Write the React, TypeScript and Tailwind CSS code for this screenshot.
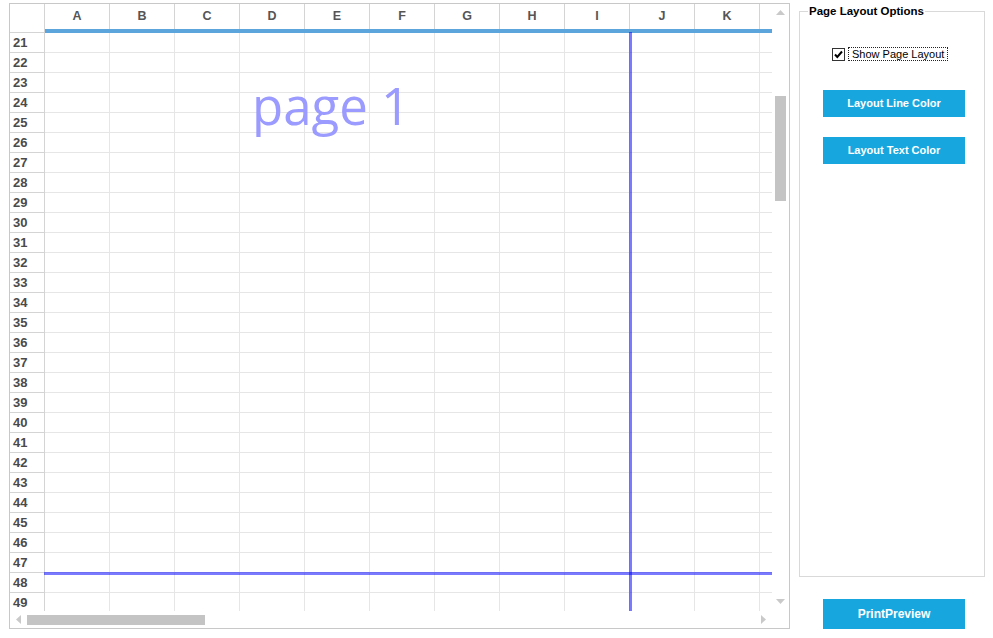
import React from 'react';

const columns = ['A', 'B', 'C', 'D', 'E', 'F', 'G', 'H', 'I', 'J', 'K', ''];
const rows = Array.from({ length: 29 }, (_, i) => 21 + i);

function Arrow({ dir }: { dir: 'up' | 'down' | 'left' | 'right' }) {
  if (dir === 'up' || dir === 'down') {
    return (
      <svg width="9" height="5" viewBox="0 0 9 5" className="block">
        <polygon
          points={dir === 'up' ? '4.5,0 9,5 0,5' : '0,0 9,0 4.5,5'}
          fill="#c9c9c9"
        />
      </svg>
    );
  }
  return (
    <svg width="5" height="9" viewBox="0 0 5 9" className="block">
      <polygon points={dir === 'left' ? '5,0 5,9 0,4.5' : '0,0 5,4.5 0,9'} fill="#c9c9c9" />
    </svg>
  );
}

function Sheet() {
  return (
    <div className="ml-[9px] mt-[3px] w-[781px] h-[626px] border border-[#c8c8c8] flex flex-col">
      <div className="flex h-[607px]">
        {/* grid */}
        <div className="w-[762px] h-[607px] relative overflow-hidden">
          <div className="flex">
            <div className="w-[35px] h-[29px] shrink-0 border-r border-b border-[#d4d4d4]" />
            <div className="flex border-b-4 border-[#5ba5dc]">
              {columns.map((c, i) => (
                <div
                  key={i}
                  className="w-[65px] h-[25px] shrink-0 border-r border-[#d4d4d4] flex items-center justify-center text-[12.5px] font-bold text-[#555]"
                >
                  {c}
                </div>
              ))}
            </div>
          </div>
          {rows.map(r => (
            <div key={r} className="flex h-[20px]">
              <div className="w-[35px] shrink-0 border-r border-b border-[#d4d4d4] pl-[3px] flex items-center text-[13px] font-bold text-[#4a4a4a]">
                {r}
              </div>
              {columns.map((_, i) => (
                <div key={i} className="w-[65px] shrink-0 border-r border-b border-[#e6e6e6]" />
              ))}
            </div>
          ))}

          {/* page layout overlay */}
          <div className="absolute left-[242px] top-[76px] text-[51px] leading-none text-[#9a9aff] font-['Open_Sans',sans-serif] whitespace-nowrap">
            page 1
          </div>
          <div className="absolute left-[619px] top-[28px] bottom-0 w-[3px] bg-[rgba(0,0,255,0.52)]" />
          <div className="absolute left-[34px] right-0 top-[568px] h-[3px] bg-[rgba(0,0,255,0.52)]" />
        </div>

        {/* vertical scrollbar */}
        <div className="w-[17px] h-[607px] flex flex-col items-center">
          <div className="mt-[6px]">
            <Arrow dir="up" />
          </div>
          <div className="mt-[81px] w-[11px] h-[105px] bg-[#c4c4c4]" />
          <div className="mt-auto mb-[7px]">
            <Arrow dir="down" />
          </div>
        </div>
      </div>

      {/* horizontal scrollbar */}
      <div className="h-[17px] flex items-center">
        <div className="w-[762px] flex items-center">
          <div className="ml-[6px]">
            <Arrow dir="left" />
          </div>
          <div className="ml-[6px] w-[178px] h-[10px] bg-[#c4c4c4]" />
          <div className="ml-auto mr-[6px]">
            <Arrow dir="right" />
          </div>
        </div>
      </div>
    </div>
  );
}

function Panel() {
  return (
    <div className="ml-[9px] w-[186px] flex flex-col">
      <div className="mt-[11px] h-[566px] border border-[#d9d9d9] relative flex flex-col">
        <div className="absolute left-[8px] -top-[8px] bg-white px-px text-[11.5px] font-bold text-black leading-[14px]">
          Page Layout Options
        </div>
        <div className="mt-[35px] ml-[32px] flex items-center h-[14px]">
          <svg width="13" height="13" viewBox="0 0 13 13" className="block">
            <rect x="0.5" y="0.5" width="12" height="12" fill="#fff" stroke="#333" />
            <path d="M3 6.5 L5.3 9 L10 3.5" fill="none" stroke="#000" strokeWidth="2" />
          </svg>
          <div className="ml-[3px] border border-dotted border-[#222] px-[3px] h-[14px] flex items-center text-[11px] text-black">
            Show Page Layout
          </div>
        </div>
        <button className="mt-[29px] ml-[23px] w-[142px] h-[27px] bg-[#17a7de] text-white text-[11px] font-bold">
          Layout Line Color
        </button>
        <button className="mt-[20px] ml-[23px] w-[142px] h-[27px] bg-[#17a7de] text-white text-[11px] font-bold">
          Layout Text Color
        </button>
      </div>
      <button className="mt-[22px] ml-[24px] w-[142px] h-[30px] bg-[#17a7de] text-white text-[12px] font-bold">
        PrintPreview
      </button>
    </div>
  );
}

export default function App() {
  return (
    <div className="w-[993px] h-[638px] bg-white flex overflow-hidden font-['Liberation_Sans',Arial,sans-serif]">
      <Sheet />
      <Panel />
    </div>
  );
}
